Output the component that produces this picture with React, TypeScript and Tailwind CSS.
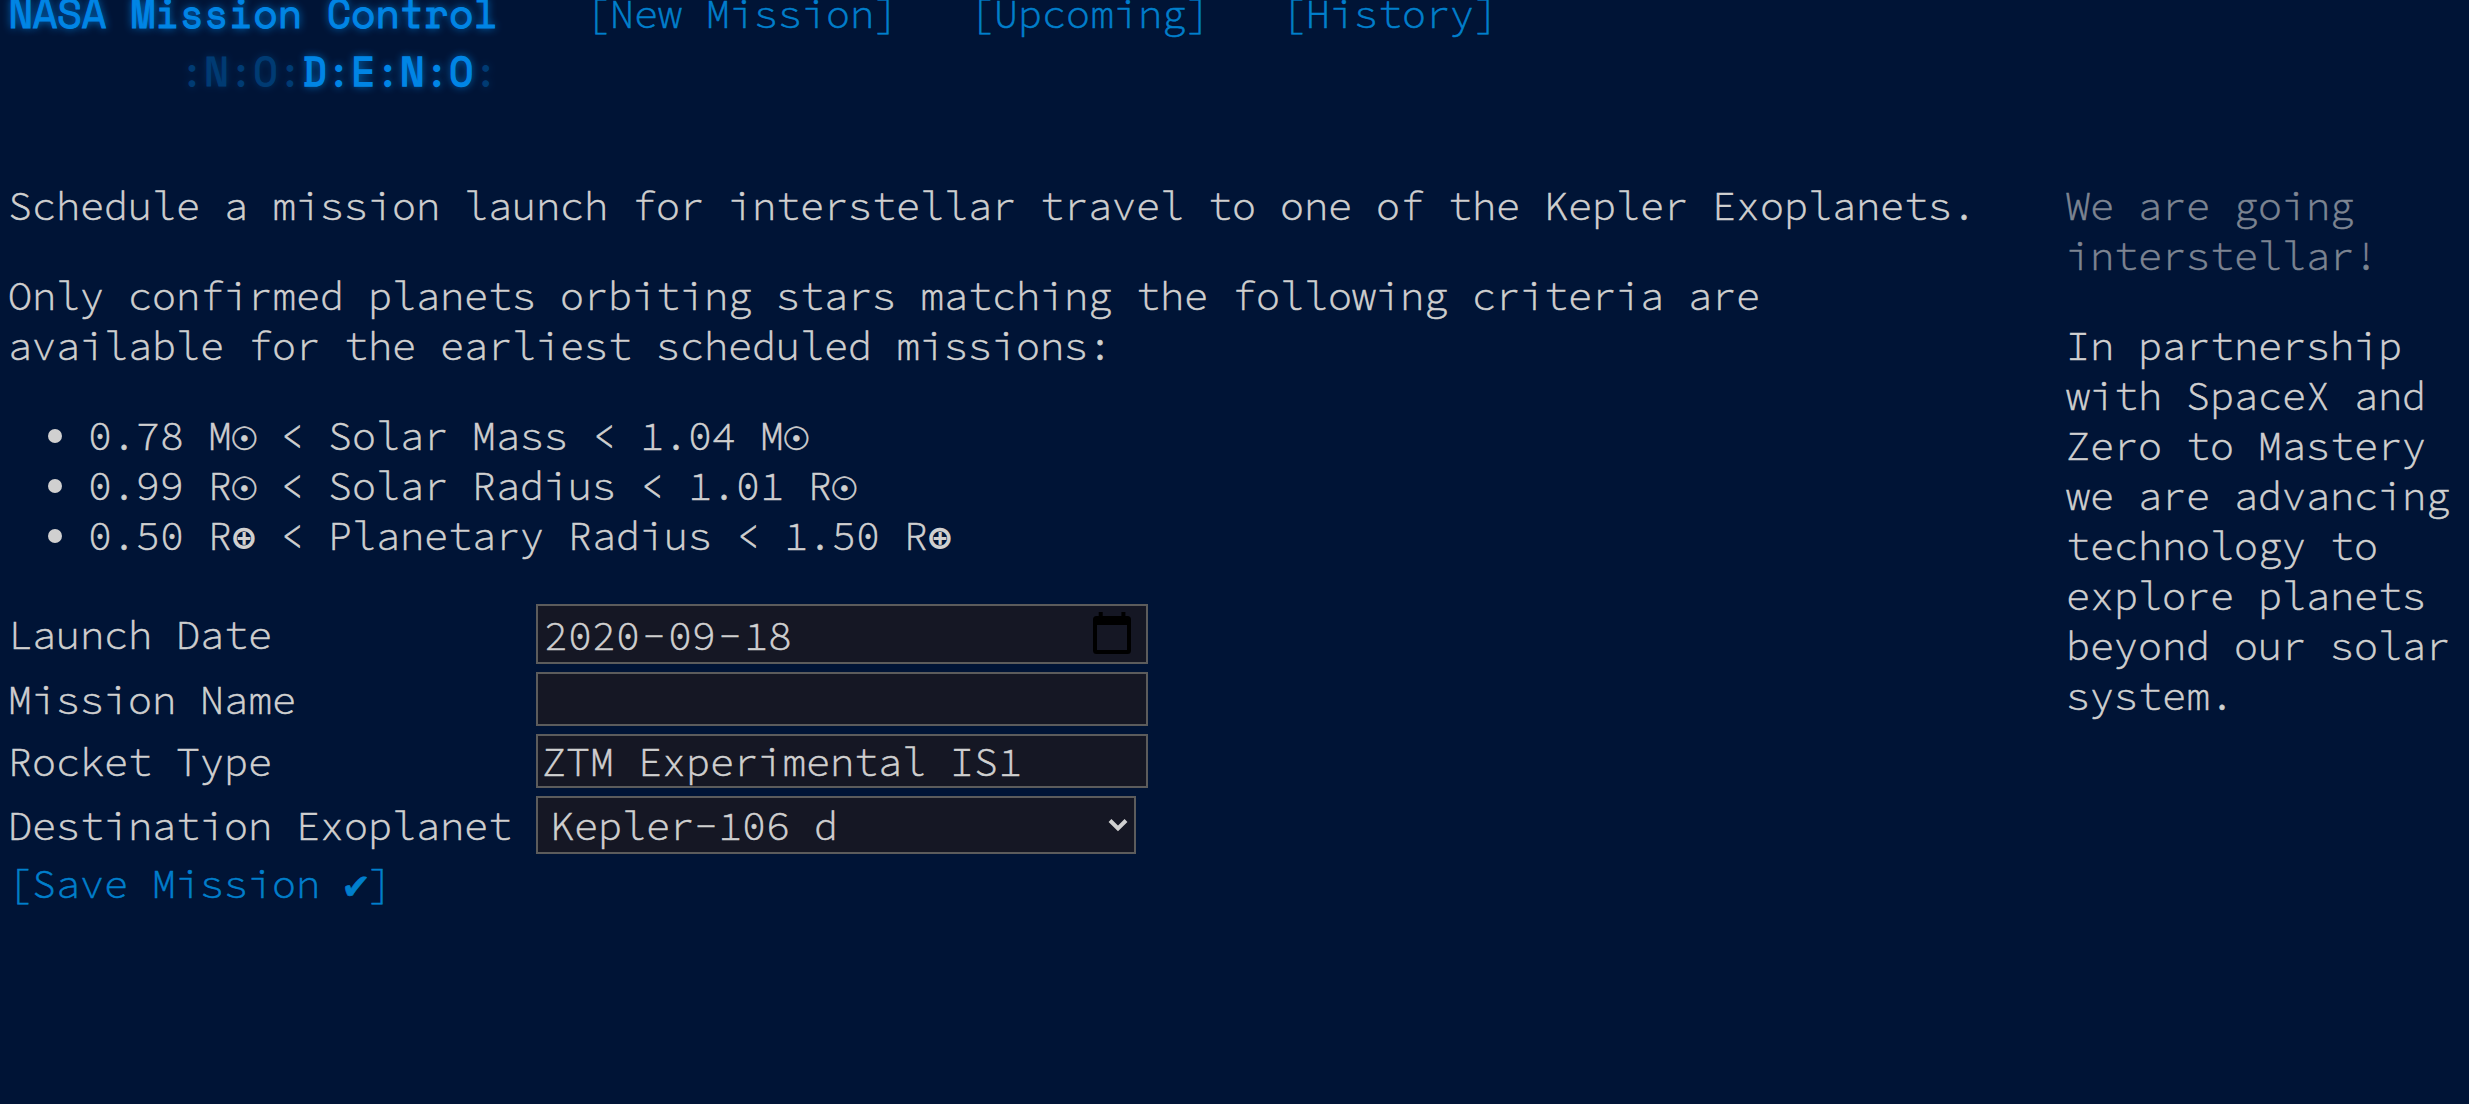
import type { ReactNode } from "react";

const mono = "font-['Source_Code_Pro','Roboto_Mono','Liberation_Mono',monospace] [-webkit-text-stroke:0.6px_currentColor]";
const field = "box-border border-2 border-[#5c5c5c] bg-[#151724]";

function Sun() {
  return (
    <span className="inline-block w-6 text-center leading-none">
      <span className="font-['DejaVu_Sans',sans-serif] text-[32px] -mx-4 [-webkit-text-stroke:0.6px_currentColor]">☉</span>
    </span>
  );
}

function Earth() {
  return (
    <span className="inline-block w-6 text-center leading-none">
      <span className="font-['DejaVu_Sans_Mono',monospace] font-bold text-[37px] -mx-4 [-webkit-text-stroke:0]">⊕</span>
    </span>
  );
}

function Row({ label, className, children }: { label: string; className: string; children: ReactNode }) {
  return (
    <div className={`flex ${className}`}>
      <label className="w-[528px] shrink-0">{label}</label>
      {children}
    </div>
  );
}

export default function App() {
  return (
    <div className={`${mono} h-[1104px] overflow-hidden bg-[#001436] text-[40px] leading-[50px] font-light text-[#d0d0d0] whitespace-pre`}>
      <header className="flex h-[110px] pl-2 text-[#007fcc]">
        <h1 className="-mt-4 w-[490px] shrink-0 text-right font-['Space_Mono','Liberation_Mono',monospace] font-normal leading-[58px] text-[#0085e5] [-webkit-text-stroke:1px_currentColor] [text-shadow:0_0_9px_#0085e5]">
          <div>NASA Mission Control</div>
          <div>
            <span className="opacity-35">:N:O:</span><span className="[-webkit-text-stroke:1.4px_currentColor]">D:E:N:O</span><span className="opacity-35">:</span>
          </div>
        </h1>
        <nav className="-mt-[11px] ml-[88px] flex gap-[72px]">
          <a>[New Mission]</a>
          <a>[Upcoming]</a>
          <a>[History]</a>
        </nav>
      </header>

      <div className="flex pl-2 pt-[71px]">
        <main className="w-[2058px] shrink-0">
          <p>Schedule a mission launch for interstellar travel to one of the Kepler Exoplanets.</p>
          <p className="mt-10">
            Only confirmed planets orbiting stars matching the following criteria are{"\n"}
            available for the earliest scheduled missions:
          </p>
          <ul className="mt-10">
            {[
              { a: "0.78 M", b: " < Solar Mass < 1.04 M", icon: <Sun /> },
              { a: "0.99 R", b: " < Solar Radius < 1.01 R", icon: <Sun /> },
              { a: "0.50 R", b: " < Planetary Radius < 1.50 R", icon: <Earth /> },
            ].map((c) => (
              <li key={c.a} className="flex h-[50px] items-center">
                <span className="ml-10 mr-[26px] size-3.5 rounded-full bg-[#d0d0d0]" />
                <span>{c.a}{c.icon}{c.b}{c.icon}</span>
              </li>
            ))}
          </ul>

          <form className="mt-[43px]">
            <Row label="Launch Date" className="h-[68px] items-start leading-[62px]">
              <div className={`${field} flex h-[60px] w-[612px] items-center justify-between pl-1 pr-[15px]`}>
                <span className="mt-1 flex">
                  <span className="px-0.5">2020</span>-<span className="px-0.5">09</span>-<span className="px-0.5">18</span>
                </span>
                <svg className="-mt-0.5 h-[42px] w-[38px]" viewBox="0 0 38 42" fill="none">
                  <path d="M5.7 0h4v4h-4zM28.4 0h4v4h-4zM3.5 4h31a3.5 3.5 0 0 1 3.5 3.5v31a3.5 3.5 0 0 1-3.5 3.5h-31a3.5 3.5 0 0 1-3.5-3.5v-31A3.5 3.5 0 0 1 3.5 4zM4 13v25h30V13z" fill="#000" fillRule="evenodd" />
                </svg>
              </div>
            </Row>
            <Row label="Mission Name" className="h-[62px] leading-[56px]">
              <div className={`${field} h-[54px] w-[612px]`} />
            </Row>
            <Row label="Rocket Type" className="h-[62px] leading-[56px]">
              <div className={`${field} h-[54px] w-[612px] pl-1 leading-[52px]`}>ZTM Experimental IS1</div>
            </Row>
            <Row label="Destination Exoplanet" className="h-[62px] leading-[60px]">
              <div className={`${field} flex h-[58px] w-[600px] items-center justify-between pl-3 pr-[6px]`}>
                <span className="mt-0.5">Kepler-106 d</span>
                <svg className="h-3.5 w-5" viewBox="0 0 20 14" fill="none" stroke="#d0d0d0" strokeWidth="4">
                  <path d="M2 2.5l8 8 8-8" />
                </svg>
              </div>
            </Row>
            <button type="button" className="mt-px h-[50px] font-light text-[#007fcc]">[Save Mission ✔]</button>
          </form>
        </main>

        <aside>
          <p className="opacity-60">We are going{"\n"}interstellar!</p>
          <p className="mt-10">
            {"In partnership\nwith SpaceX and\nZero to Mastery\nwe are advancing\ntechnology to\nexplore planets\nbeyond our solar\nsystem."}
          </p>
        </aside>
      </div>
    </div>
  );
}
